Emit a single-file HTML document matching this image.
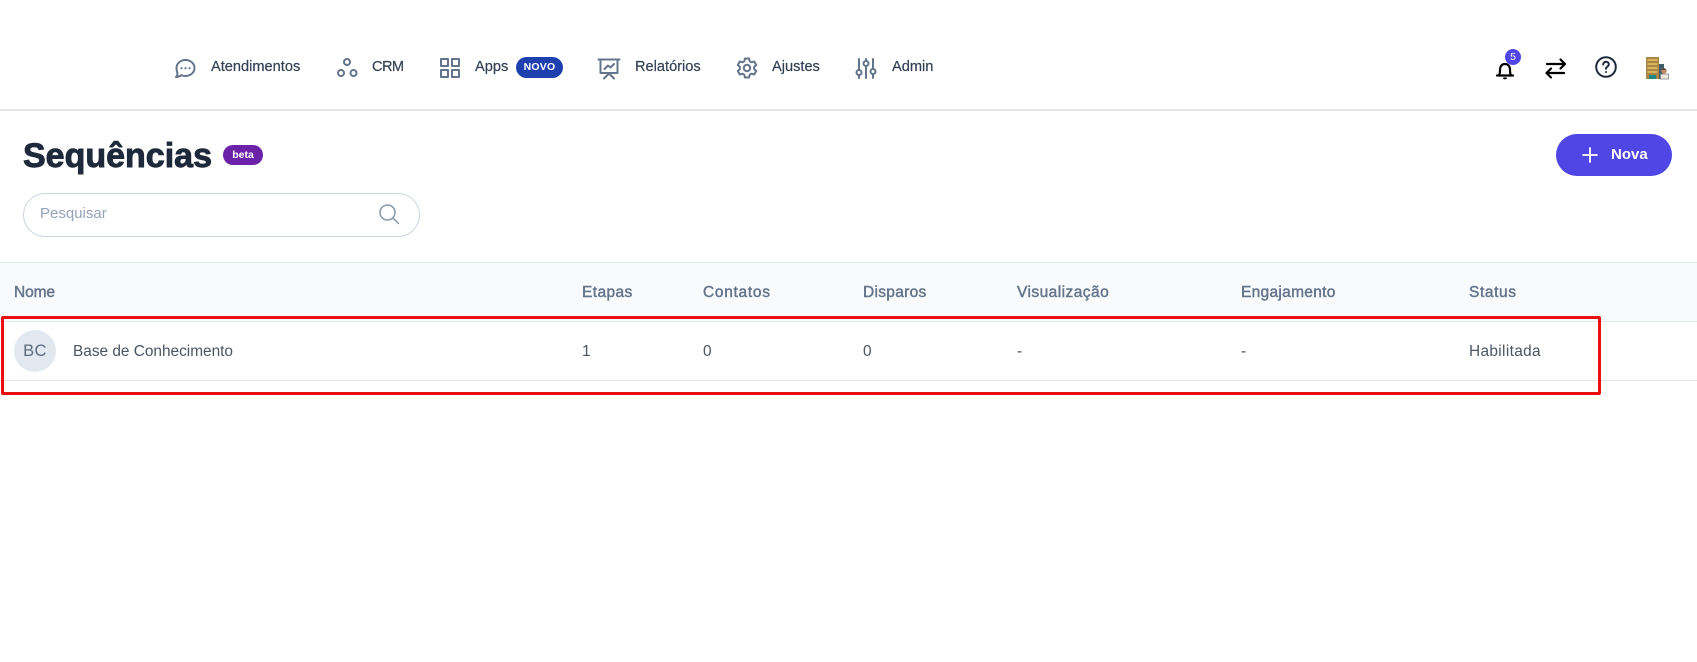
<!DOCTYPE html>
<html lang="pt-BR"><head><meta charset="utf-8"><title>Sequências</title>
<style>
html,body{margin:0;padding:0;background:#fff}
body{width:1697px;height:662px;position:relative;overflow:hidden;font-family:"Liberation Sans",sans-serif;color:#374151}
.t{position:absolute;white-space:nowrap;line-height:20px}
.nav{font-size:14.6px;top:57px;color:#334155;-webkit-text-stroke:.2px #334155}
.h{font-size:15.5px;top:283px;color:#64748b;-webkit-text-stroke:.45px #64748b;letter-spacing:.4px}
.c{font-size:15.4px;top:342px;color:#4b5563}
svg{position:absolute;overflow:visible}
.i{fill:none;stroke:#64748b;stroke-width:2;stroke-linecap:round;stroke-linejoin:round}
.k{fill:none;stroke:#000;stroke-width:2.2;stroke-linecap:round;stroke-linejoin:round}
</style></head><body>

<svg class="i" style="left:174px;top:58px" width="22" height="22" viewBox="0 0 22 22"><path d="M11.500 2c5 0 9 3.500 9 8s-4 8-9 8c-1.500 0-3-.3-4.200-.9-1.300 1.200-3 1.800-5.300 2 1-1.300 1.500-2.500 1.500-3.800C2.900 13.800 2.500 12 2.500 10c0-4.500 4-8 9-8z"/><path d="M7.500 10.200h.01M11.500 10.200h.01M15.500 10.200h.01" stroke-width="2.200"/></svg>
<div class="t nav" style="left:211px">Atendimentos</div>

<svg class="i" style="left:336px;top:57px" width="22" height="22" viewBox="0 0 22 22"><circle cx="11" cy="5" r="3"/><circle cx="5" cy="16" r="3"/><circle cx="17.500" cy="16" r="3"/></svg>
<div class="t nav" style="left:372px;letter-spacing:-.6px">CRM</div>

<svg class="i" style="left:440px;top:58px" width="20" height="20" viewBox="0 0 20 20"><rect x="1" y="1" width="7" height="7"/><rect x="12" y="1" width="7" height="7"/><rect x="1" y="12" width="7" height="7"/><rect x="12" y="12" width="7" height="7"/></svg>
<div class="t nav" style="left:475px">Apps</div>
<div class="t" style="left:516px;top:57px;width:47px;height:21px;line-height:21px;border-radius:11px;background:#1e40af;color:#fff;font-size:10.500px;font-weight:700;text-align:center;letter-spacing:.2px">NOVO</div>

<svg class="i" style="left:598px;top:58px" width="22" height="22" viewBox="0 0 22 22"><path d="M.5 1.500h21M2.500 1.500v13.500h17V1.500M6 20.500l5-5 5 5M6.500 11l3.500-3.500 2.500 2 3.500-3.500"/></svg>
<div class="t nav" style="left:635px">Relatórios</div>

<svg class="i" style="left:736px;top:57px" width="22" height="22" viewBox="0 0 22 22"><path d="M9 1.500h4l.7 2.800 1.700 1 2.800-.8 2 3.500-2.100 2v2l2.100 2-2 3.500-2.800-.8-1.700 1L13 20.500H9l-.7-2.800-1.700-1-2.800.8-2-3.500 2.100-2v-2l-2.100-2 2-3.500 2.800.8 1.700-1z"/><circle cx="11" cy="11" r="3.200"/></svg>
<div class="t nav" style="left:772px">Ajustes</div>

<svg class="i" style="left:856px;top:58px" width="20" height="21" viewBox="0 0 20 21"><path d="M3 1v11M3 17.500v2.500M10 1v2M10 8.500V20M17 1v10M17 16.500V20"/><circle cx="3" cy="14.500" r="2.500"/><circle cx="10" cy="5.500" r="2.500"/><circle cx="17" cy="13.500" r="2.500"/></svg>
<div class="t nav" style="left:892px">Admin</div>

<svg class="k" style="left:1496px;top:60px" width="18" height="20" viewBox="0 0 18 20"><path d="M1 15.500h16M3 15.500c.8-1.500 1-3 1-5.500 0-3.500 1.800-6 5-6s5 2.500 5 6c0 2.500.2 4 1 5.500"/><path d="M8 18.300h2" stroke-width="1.800"/></svg>
<div class="t" style="left:1505px;top:49px;width:16px;height:16px;line-height:16px;border-radius:50%;background:#4f46e5;color:#fff;font-size:10.500px;text-align:center">5</div>

<svg class="k" style="left:1545px;top:57px" width="21" height="22" viewBox="0 0 21 22"><path d="M2 7h18M15.500 2.500L20 7l-4.500 4.500M19 16H1.500M6 11.500L1.500 16 6 20.500"/></svg>

<svg style="left:1595px;top:56px" width="22" height="22" viewBox="0 0 22 22" fill="none" stroke="#1e293b" stroke-width="2" stroke-linecap="round"><circle cx="11" cy="11" r="9.800"/><path d="M8.200 8.500c0-1.600 1.200-2.700 2.800-2.700s2.800 1.100 2.800 2.600c0 2.200-2.800 2.200-2.800 4.300M11 16h.01"/></svg>

<svg style="left:1646px;top:57px" width="23" height="23" viewBox="0 0 23 23"><rect x="0" y="0" width="13" height="22" fill="#a98645"/><rect x="1.500" y="2" width="10" height="2" fill="#d8b55c"/><rect x="1.500" y="6" width="10" height="2" fill="#d8b55c"/><rect x="1.500" y="10" width="10" height="2" fill="#d8b55c"/><rect x="1.500" y="14" width="10" height="2" fill="#d8b55c"/><rect x="3" y="18" width="7" height="4" fill="#1f8a85"/><rect x="13" y="7" width="5" height="15" fill="#3f5f6b"/><circle cx="18" cy="14" r="2.700" fill="#c58a68"/><path d="M15.300 13l2.700-2 2.700 2z" fill="#5a3a2a"/><rect x="14.500" y="17" width="8" height="5" fill="#eee9dd" stroke="#777" stroke-width=".7"/></svg>

<div style="position:absolute;left:0;top:109px;width:1697px;height:2px;background:#e5e7eb"></div>

<div class="t" style="left:23px;top:136px;line-height:40px;font-size:34px;font-weight:700;color:#1e293b;-webkit-text-stroke:.9px #1e293b">Sequências</div>
<div class="t" style="left:223px;top:145px;width:40px;height:20px;line-height:20px;border-radius:10px;background:#6b21a8;color:#fff;font-size:10.500px;font-weight:700;text-align:center">beta</div>

<div style="position:absolute;left:23px;top:193px;width:395px;height:42px;border:1px solid #cbd5e1;border-radius:22px"></div>
<div class="t" style="left:40px;top:204px;font-size:15px;color:#94a3b8">Pesquisar</div>
<svg style="left:378px;top:203px" width="22" height="24" viewBox="0 0 22 24" fill="none" stroke="#8a99ad" stroke-width="1.500" stroke-linecap="round"><circle cx="9.500" cy="9.500" r="7.500"/><path d="M15 15l5.500 5.500"/></svg>

<div style="position:absolute;left:1556px;top:134px;width:116px;height:42px;border-radius:21px;background:#4f46e5"></div>
<svg style="left:1582px;top:147px" width="16" height="16" viewBox="0 0 16 16" fill="none" stroke="#fff" stroke-width="1.800" stroke-linecap="round"><path d="M8 1v14M1 8h14"/></svg>
<div class="t" style="left:1611px;top:145px;font-size:15px;font-weight:700;color:#fff">Nova</div>

<div style="position:absolute;left:0;top:262px;width:1697px;height:60px;background:#f8fafc;border-top:1px solid #e2e8f0;border-bottom:1px solid #e2e8f0;box-sizing:border-box"></div>
<div class="t h" style="left:14px;letter-spacing:-.1px">Nome</div>
<div class="t h" style="left:582px">Etapas</div>
<div class="t h" style="left:703px;letter-spacing:.7px">Contatos</div>
<div class="t h" style="left:863px;letter-spacing:.3px">Disparos</div>
<div class="t h" style="left:1017px;letter-spacing:.45px">Visualização</div>
<div class="t h" style="left:1241px;letter-spacing:.3px">Engajamento</div>
<div class="t h" style="left:1469px;letter-spacing:.6px">Status</div>

<div style="position:absolute;left:0;top:380px;width:1697px;height:1px;background:#e5e7eb"></div>
<div class="t" style="left:14px;top:330px;width:42px;height:42px;line-height:42px;border-radius:50%;background:#e2e8f0;color:#5b6b80;font-size:16.500px;text-align:center;letter-spacing:.4px">BC</div>
<div class="t c" style="left:73px">Base de Conhecimento</div>
<div class="t c" style="left:582px">1</div>
<div class="t c" style="left:703px">0</div>
<div class="t c" style="left:863px">0</div>
<div class="t c" style="left:1017px">-</div>
<div class="t c" style="left:1241px">-</div>
<div class="t c" style="left:1469px;letter-spacing:.35px">Habilitada</div>

<div style="position:absolute;left:1px;top:316px;width:1600px;height:79px;border:3px solid #e81010;box-sizing:border-box;border-radius:2px"></div>
</body></html>
